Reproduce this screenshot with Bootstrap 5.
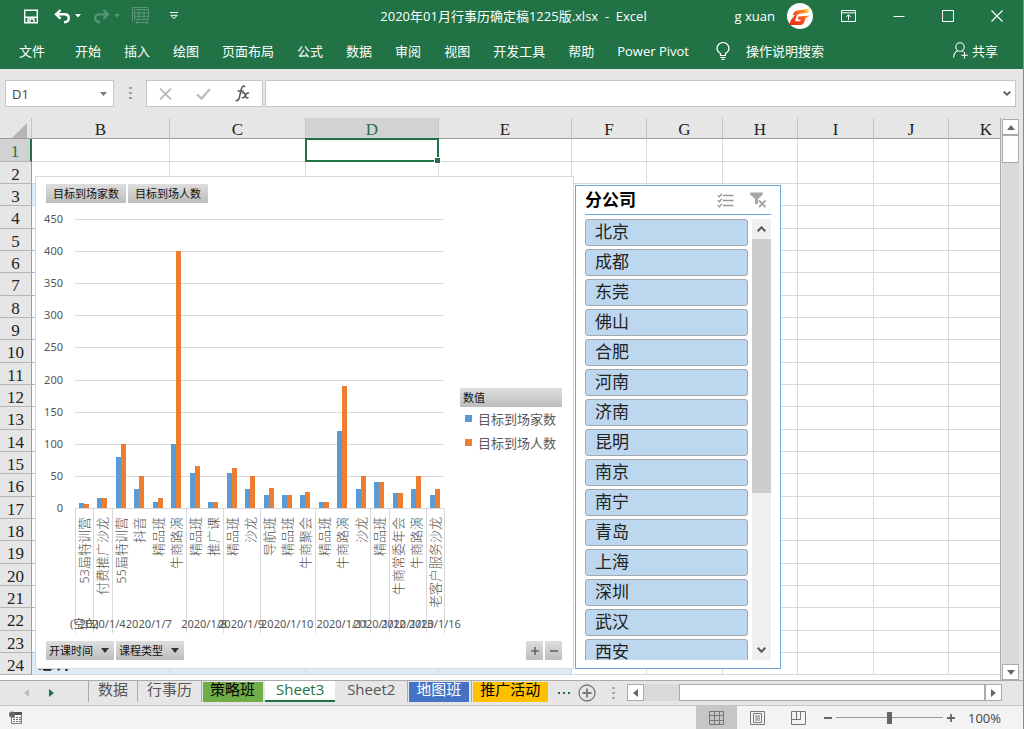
<!DOCTYPE html>
<html lang="zh-CN">
<head>
<meta charset="utf-8">
<meta name="viewport" content="width=device-width, initial-scale=1">
<title>2020年01月行事历确定稿1225版.xlsx - Excel</title>
<link href="https://cdn.jsdelivr.net/npm/bootstrap@5.3.0/dist/css/bootstrap.min.css" rel="stylesheet">
<style>
  :root { --xl-green: #217346; --edge: #ababab; --chrome: #e6e6e6; }
  body { font: 13px/18px "Open Sans", "Noto Sans CJK SC", sans-serif; color: #444; background: var(--chrome); }
  svg { display: block; flex: none; }
  .ibtn { display: flex; align-items: center; justify-content: center; padding: 0; border: 0; background: none; color: inherit; }
  .app { border-right: 1px solid #8a8a8a; }

  .titlebar { background: var(--xl-green); color: #fff; height: 69px; }
  .title-row { height: 32px; }
  .side { flex: 1 1 0; }
  .side:first-child { padding-left: 24px; }
  .side:last-child { padding-right: 20px; }
  .window-btns { gap: 37px; }
  .ribbon { height: 37px; padding: 0 25px 0 19px; gap: 23px; }
  .ribbon a { color: #fff; text-decoration: none; white-space: nowrap; }
  .ribbon .file-tab { margin-right: 7px; }

  .formula { height: 49px; padding: 11px 7px 12px 5px; }
  .fbox { border: 1px solid #c6c6c6; background: #fff; height: 27px; }
  .fbox input { border: 0; outline: 0; background: none; color: #444; min-width: 0; padding: 0 6px; }
  .name-box { width: 109px; padding-right: 6px; }
  .fx-box { width: 117px; margin-right: 2px; }
  .grip { width: 32px; color: #a0a0a0; }

  .pane { min-height: 0; }
  .viewport { min-width: 0; background: #fff; border-right: 1px solid var(--edge); }
  .sheet { table-layout: fixed; border-collapse: separate; border-spacing: 0; width: 1024px; font: 17px/20px "Liberation Serif", "Noto Sans CJK SC", serif; color: #222; }
  .sheet th { font-weight: 400; text-align: center; padding: 0; background: var(--chrome); border-right: 1px solid #b5b5b5; border-bottom: 1px solid #b5b5b5; }
  .sheet thead th { height: 21px; line-height: 16px; padding-top: 4px; border-right-color: #c4c4c4; border-bottom-color: #9b9b9b; }
  .sheet tbody tr { height: 22px; }
  .sheet tbody tr:nth-child(3n+1) { height: 23px; }
  .sheet tbody th { line-height: 16px; padding-top: 4px; border-right-color: #9b9b9b; }
  .sheet td { padding: 0; line-height: 18px; border-right: 1px solid #d9d9d9; border-bottom: 1px solid #d9d9d9; }
  .sheet td.pivot-line { border-bottom-color: #9bc2e6; }
  .sheet td.pivot-fill { background: #ddebf7; font-weight: 700; padding-left: 6px; }
  .sheet th.picked { background: #d2d2d2; color: var(--xl-green); }
  .sheet thead th.picked { border-bottom-color: var(--xl-green); }
  .sheet tbody th.picked { border-right: 2px solid var(--xl-green); }
  .sheet td.active-cell { position: relative; }
  .cursor { position: absolute; inset: -1px -1px -1px -1px; border: 2px solid var(--xl-green); }
  .cursor::after { content: ""; position: absolute; right: -3px; bottom: -3px; width: 5px; height: 5px; background: var(--xl-green); outline: 1px solid #fff; }

  .chart-obj { position: absolute; left: 35px; top: 58px; width: 539px; height: 493px; background: #fff; border: 1px solid #d9d9d9; padding: 7px 11px 8px 10px; }
  .field { height: 19px; padding: 0 7px; border: 0; color: #111; font-size: 11px; line-height: 19px; background: linear-gradient(#dedede, #bdbdbd); white-space: nowrap; display: flex; align-items: center; }
  .field.drop { padding: 0 5px 0 3px; gap: 8px; }
  .field.step { width: 17px; padding: 0; justify-content: center; }
  .legend-box { width: 102px; padding-bottom: 2px; }
  .legend-box .field { padding: 0 3px; }
  .legend-row { height: 24px; padding-left: 5px; gap: 6px; color: #595959; white-space: nowrap; }
  .swatch { width: 7px; height: 7px; }
  .blue { background: #5b9bd5; } .orange { background: #ed7d31; }
  .plot { overflow: visible; font-family: "Noto Sans", "Noto Sans CJK SC", sans-serif; font-size: 11px; fill: #555; }
  .plot .cat { font-size: 13px; font-weight: 300; }

  .slicer { position: absolute; left: 575px; top: 67px; width: 206px; height: 484px; background: #fff; border: 1px solid #6fa8dc; padding: 0 9px 8px; font: 17px/20px "Liberation Serif", "Noto Sans CJK SC", serif; }
  .slicer-head { height: 29px; border-bottom: 1px solid #6fa8dc; margin-bottom: 4px; flex: none; color: #999; }
  .slicer-head strong { color: #000; padding-top: 2px; }
  .slicer-list { gap: 3px; width: 163px; }
  .slicer-list button { height: 27px; flex: none; border: 1px solid #a0a8b0; border-radius: 3px; background: #bdd7ee; color: #222; text-align: left; padding: 0 9px; line-height: 25px; }
  .vbar { width: 19px; background: #f0f0f0; color: #555; }
  .vbar .ibtn { height: 20px; width: 19px; }
  .vbar .slide { height: 254px; background: #cdcdcd; }

  .vscroll { width: 22px; padding: 1px 4px 0 1px; }
  .vscroll .track, .hscroll .track { background: #dadada; }
  .sbtn { width: 17px; height: 16px; background: #fff; border: 1px solid var(--edge); color: #666; flex: none; }
  .thumb { background: #fff; border: 1px solid var(--edge); }
  .vscroll .thumb { height: 28px; }

  .tabbar { height: 25px; border-top: 1px solid var(--edge); flex: none; }
  .tabbar .nav-gap { width: 88px; padding-left: 20px; gap: 20px; }
  .tab { height: 21px; border: 0; border-left: 1px solid var(--edge); padding: 0 9px 4px; background: none; color: #555; font-size: 15px; line-height: 17px; white-space: nowrap; }
  .tab.tinted { box-shadow: inset 1px 0 var(--chrome), inset 0 1px var(--chrome); padding: 0 8px 4px; margin-right: 2px; }
  .tab.current { background: #fff; color: var(--xl-green); border-left: 0; border-bottom: 2px solid var(--xl-green); padding: 0 11px 2px; }
  .hscroll { min-width: 0; padding-right: 21px; height: 17px; margin-top: 3px; }
  .hscroll .track { width: 35px; }

  .status { height: 24px; border-top: 1px solid #c6c6c6; background: #f3f3f3; flex: none; padding-right: 22px; color: #444; }
  .view { width: 41px; height: 23px; }
  .view.on { background: #c6c6c6; }
  .zoom-range { appearance: none; width: 107px; height: 14px; margin: 0 3px; background: linear-gradient(#999, #999) center / 100% 1px no-repeat; }
  .zoom-range::-webkit-slider-thumb { appearance: none; width: 5px; height: 12px; background: #666; }
</style>
</head>
<body>
<div class="app vh-100 d-flex flex-column overflow-hidden">

  <header class="titlebar flex-shrink-0">
    <div class="title-row d-flex align-items-center">
      <div class="side d-flex align-items-center">
        <button class="ibtn" aria-label="保存"><svg width="14" height="15" viewBox="0 0 14 15" fill="none" stroke="#fff" stroke-width="1.4"><path d="M.7 1.200h12.600v12.600H.7zM1 8.300h12M4 14v-4h6v4"/><path d="M6 11v3"/></svg></button>
        <button class="ibtn ms-3" aria-label="撤消"><svg width="17" height="15" viewBox="0 0 17 15" fill="none" stroke="#fff" stroke-width="2.400"><path d="M6.500 1 2 5.300 6.500 9.600M2.500 5.300h7.800q4.500 0 4.500 3.800 0 4-4.800 4.200"/></svg></button>
        <svg class="ms-1" width="6" height="4" viewBox="0 0 6 4" fill="#fff"><path d="M0 0h6L3 3.500z"/></svg>
        <button class="ibtn ms-2 ps-1 opacity-25" aria-label="恢复"><svg width="17" height="15" viewBox="0 0 17 15" fill="none" stroke="#fff" stroke-width="2.200"><path d="m10.500 1 4.500 4.300-4.500 4.300M14.500 5.300H6.700Q2.200 5.300 2.200 9.100q0 4 4.800 4.200"/></svg></button>
        <svg class="ms-1 opacity-25" width="6" height="4" viewBox="0 0 6 4" fill="#fff"><path d="M0 0h6L3 3.500z"/></svg>
        <button class="ibtn ms-2 ps-1 opacity-25" aria-label="自动调整"><svg width="18" height="18" viewBox="0 0 18 18" fill="none" stroke="#fff"><path d="M.5 15V.5H16M2.500 2.500h14v10h-14zM2.500 6h14M2.500 9.300h14M7 2.500v10M12 2.500v10M4 15.500h12M6 13.300l-2.300 2.200L6 17.700M14 13.300l2.300 2.200-2.300 2.200"/></svg></button>
        <button class="ibtn ms-3" aria-label="自定义"><svg class="ms-1" width="8" height="8" viewBox="0 0 8 8" fill="none" stroke="#fff"><path d="M0 .5h8M.8 3.300h6.400L4 6.700z"/></svg></button>
      </div>
      <div class="text-nowrap">2020年01月行事历确定稿1225版.xlsx &nbsp;-&nbsp; Excel</div>
      <div class="side d-flex align-items-center justify-content-end">
        <span class="me-2 pe-1 text-nowrap">g xuan</span>
        <svg width="26" height="26" viewBox="0 0 26 26"><defs><linearGradient id="flame" x1="0" y1="1" x2="1" y2="0"><stop offset="0" stop-color="#ee2418"/><stop offset=".5" stop-color="#f4551d"/><stop offset="1" stop-color="#ffd21c"/></linearGradient></defs><circle cx="13" cy="13" r="13" fill="#fff"/><path fill="url(#flame)" d="M24.500 5.200 10.500 7.500Q7 8 6.200 11l-.4 1.300L8 12 4 17l-2 5h11q3.500 0 4.500-3.500l1-3.500 5-2.500-12 1-1 3h3.200l-.5 1.800H8l1.500-5q.6-2.300 3-2.600l8-1.200 2.500-1.800-5 .2z"/></svg>
        <div class="window-btns d-flex align-items-center ms-4 ps-1">
          <button class="ibtn" aria-label="功能区显示选项"><svg width="15" height="12" viewBox="0 0 15 12" fill="none" stroke="#fff"><path d="M.5.5h14v11H.5zM1 2.800h13M7.500 10V5M5.200 7l2.300-2.300L9.800 7"/></svg></button>
          <button class="ibtn" aria-label="最小化"><svg width="12" height="12" viewBox="0 0 12 12" stroke="#fff"><path d="M.5 6.500h11"/></svg></button>
          <button class="ibtn" aria-label="最大化"><svg width="12" height="12" viewBox="0 0 12 12" fill="none" stroke="#fff"><path d="M.5.5h11v11H.5z"/></svg></button>
          <button class="ibtn" aria-label="关闭"><svg width="12" height="12" viewBox="0 0 12 12" stroke="#fff" stroke-width="1.200"><path d="m.5.5 11 11m0-11-11 11"/></svg></button>
        </div>
      </div>
    </div>
    <nav class="ribbon d-flex align-items-center">
      <a class="file-tab" href="#">文件</a><a href="#">开始</a><a href="#">插入</a><a href="#">绘图</a><a href="#">页面布局</a><a href="#">公式</a><a href="#">数据</a><a href="#">审阅</a><a href="#">视图</a><a href="#">开发工具</a><a href="#">帮助</a><a href="#">Power Pivot</a>
      <a class="d-flex align-items-center gap-3 ms-1" href="#"><svg width="14" height="18" viewBox="0 0 14 18" fill="none" stroke="#fff" stroke-width="1.200"><path d="M4.500 13.500v-2Q1 9.500 1 6.500a6 6 0 0 1 12 0q0 3-3.500 5v2zM4.500 15.500h5M5.500 17.300h3"/></svg><span>操作说明搜索</span></a>
      <a class="d-flex align-items-center gap-1 ms-auto" href="#"><svg width="15" height="17" viewBox="0 0 15 17" fill="none" stroke="#fff" stroke-width="1.100"><circle cx="7" cy="5" r="4.200"/><path d="M.6 15.500Q1 10 5 8.800M9 8.800l1.500.9M11.500 10v6.500M8.200 13.200h6.600"/></svg><span>共享</span></a>
    </nav>
  </header>

  <div class="formula d-flex flex-shrink-0">
    <div class="fbox name-box d-flex align-items-center">
      <input class="flex-fill" aria-label="名称框" value="D1">
      <button class="ibtn" aria-label="名称列表"><svg width="7" height="4" viewBox="0 0 7 4" fill="#777"><path d="M0 0h7L3.500 4z"/></svg></button>
    </div>
    <div class="grip d-flex align-items-center justify-content-center"><svg width="3" height="12" viewBox="0 0 3 12" fill="currentColor"><path d="M0 0h3v2H0zM0 5h3v2H0zM0 10h3v2H0z"/></svg></div>
    <div class="fbox fx-box d-flex align-items-center justify-content-around">
      <button class="ibtn" aria-label="取消"><svg width="13" height="12" viewBox="0 0 13 12" stroke="#bbb" stroke-width="1.800"><path d="m1 .5 11 11M12 .5l-11 11"/></svg></button>
      <button class="ibtn" aria-label="输入"><svg width="15" height="12" viewBox="0 0 15 12" fill="none" stroke="#bbb" stroke-width="2.200"><path d="m1 6.500 4.500 4L14 1"/></svg></button>
      <button class="ibtn" aria-label="插入函数"><svg width="15" height="17" viewBox="0 0 15 17" fill="none" stroke="#555" stroke-width="1.500" stroke-linecap="round"><path d="M9.500 1.500Q7.500.2 6.500 3.500L4.200 13q-.8 3-3 2.500M3.200 6h5"/><path d="M7.500 8q1.800-1 2.500 1l1 3q.6 1.500 2 .7M13.500 8q-1-.7-2.500 1.500L9.300 12Q8.300 13.200 7.300 12.700"/></svg></button>
    </div>
    <div class="fbox flex-fill d-flex align-items-center pe-1">
      <input class="flex-fill" aria-label="编辑栏">
      <button class="ibtn" aria-label="展开编辑栏"><svg width="8" height="5" viewBox="0 0 8 5" fill="none" stroke="#666" stroke-width="2"><path d="m.7.7 3.300 3 3.300-3"/></svg></button>
    </div>
  </div>

  <main class="pane flex-fill d-flex">
    <div class="viewport flex-fill position-relative overflow-hidden">
      <table class="sheet" id="sheet"></table>

      <section class="chart-obj d-flex flex-column" aria-label="数据透视图">
        <div class="d-flex flex-shrink-0" style="gap:2px"><button class="field">目标到场家数</button><button class="field">目标到场人数</button></div>
        <div class="d-flex flex-fill">
          <svg class="plot" id="plot" width="414" height="438" viewBox="0 0 414 438"></svg>
          <div class="legend-box align-self-center">
            <div class="field">数值</div>
            <div class="legend-row d-flex align-items-center"><span class="swatch blue"></span>目标到场家数</div>
            <div class="legend-row d-flex align-items-center"><span class="swatch orange"></span>目标到场人数</div>
          </div>
        </div>
        <div class="d-flex flex-shrink-0" style="gap:2px">
          <button class="field drop">开课时间<svg width="8" height="5" viewBox="0 0 8 5" fill="#333"><path d="M0 0h8L4 5z"/></svg></button>
          <button class="field drop me-auto">课程类型<svg width="8" height="5" viewBox="0 0 8 5" fill="#333"><path d="M0 0h8L4 5z"/></svg></button>
          <button class="field step" aria-label="展开"><svg width="8" height="8" viewBox="0 0 8 8" stroke="#666" stroke-width="1.600"><path d="M0 4h8M4 0v8"/></svg></button>
          <button class="field step" aria-label="折叠"><svg width="8" height="8" viewBox="0 0 8 8" stroke="#666" stroke-width="1.600"><path d="M0 4h8"/></svg></button>
        </div>
      </section>

      <section class="slicer d-flex flex-column" aria-label="切片器">
        <div class="slicer-head d-flex align-items-center">
          <strong class="me-auto">分公司</strong>
          <button class="ibtn me-3" aria-label="多选"><svg width="17" height="15" viewBox="0 0 17 15" fill="none" stroke="currentColor" stroke-width="1.300"><path d="M6 2.500h10.500M6 7.500h10.500M6 12.500h10.500M.7 2.200l1.600 1.500L5 .7M.7 7.200l1.600 1.500L5 5.700M.7 12.200l1.600 1.500L5 10.700"/></svg></button>
          <button class="ibtn me-1" aria-label="清除筛选器"><svg width="17" height="16" viewBox="0 0 17 16"><path d="M0 .5h13v1.800L8 7v5H5V7L0 2.300z" fill="#a5a5a5"/><path d="m9 8.500 6.500 6.500m0-6.500L9 15" stroke="#a5a5a5" stroke-width="1.800"/></svg></button>
        </div>
        <div class="d-flex flex-fill justify-content-between overflow-hidden">
          <div class="slicer-list d-flex flex-column overflow-hidden" id="branches"></div>
          <div class="vbar d-flex flex-column justify-content-between">
            <div><button class="ibtn" aria-label="向上"><svg width="9" height="6" viewBox="0 0 9 6" fill="none" stroke="currentColor" stroke-width="2"><path d="M.7 5.200 4.500 1.300l3.800 3.900"/></svg></button><div class="slide"></div></div>
            <button class="ibtn" aria-label="向下"><svg width="9" height="6" viewBox="0 0 9 6" fill="none" stroke="currentColor" stroke-width="2"><path d="M.7.8l3.800 3.900L8.300.8"/></svg></button>
          </div>
        </div>
      </section>
    </div>

    <div class="vscroll d-flex flex-column">
      <button class="ibtn sbtn" aria-label="向上滚动"><svg width="8" height="5" viewBox="0 0 8 5" fill="currentColor"><path d="M0 5h8L4 0z"/></svg></button>
      <div class="track flex-fill"><div class="thumb"></div></div>
      <button class="ibtn sbtn" aria-label="向下滚动"><svg width="8" height="5" viewBox="0 0 8 5" fill="currentColor"><path d="M0 0h8L4 5z"/></svg></button>
    </div>
  </main>

  <div class="tabbar d-flex">
    <div class="nav-gap d-flex align-items-center flex-shrink-0">
      <button class="ibtn ms-1" aria-label="上一张"><svg width="5" height="8" viewBox="0 0 5 8" fill="#bbb"><path d="M5 0v8L0 4z"/></svg></button>
      <button class="ibtn" aria-label="下一张"><svg width="5" height="8" viewBox="0 0 5 8" fill="#217346"><path d="M0 0v8l5-4z"/></svg></button>
    </div>
    <button class="tab">数据</button>
    <button class="tab">行事历</button>
    <button class="tab tinted text-black" style="background:#70ad47">策略班</button>
    <button class="tab current">Sheet3</button>
    <button class="tab border-start-0 px-2 me-1">&nbsp;Sheet2</button>
    <button class="tab tinted text-white" style="background:#4472c4">地图班</button>
    <button class="tab tinted text-black" style="background:#ffc000">推广活动</button>
    <button class="ibtn ms-1 ps-1 flex-shrink-0" aria-label="更多工作表"><svg width="12" height="2" viewBox="0 0 12 2" fill="#217346"><path d="M0 0h2v2H0zM5 0h2v2H5zM10 0h2v2h-2z"/></svg></button>
    <button class="ibtn ms-2 flex-shrink-0" aria-label="新工作表"><svg width="18" height="18" viewBox="0 0 18 18" fill="none" stroke="#777" stroke-width="1.300"><circle cx="9" cy="9" r="8"/><path d="M4.500 9h9M9 4.500v9" stroke-width="1.800"/></svg></button>
    <span class="d-flex align-items-center ms-3 me-2 pe-1 flex-shrink-0"><svg width="3" height="12" viewBox="0 0 3 12" fill="#aaa"><path d="M0 0h3v2H0zM0 5h3v2H0zM0 10h3v2H0z"/></svg></span>
    <div class="hscroll flex-fill d-flex">
      <button class="ibtn sbtn h-100" aria-label="向左滚动"><svg width="5" height="8" viewBox="0 0 5 8" fill="currentColor"><path d="M5 0v8L0 4z"/></svg></button>
      <div class="track"></div>
      <div class="thumb flex-fill"></div>
      <button class="ibtn sbtn h-100" aria-label="向右滚动"><svg width="5" height="8" viewBox="0 0 5 8" fill="currentColor"><path d="M0 0v8l5-4z"/></svg></button>
    </div>
  </div>

  <footer class="status d-flex align-items-center">
    <button class="ibtn ms-2 me-auto" aria-label="录制宏"><svg width="15" height="14" viewBox="0 0 15 14"><path d="M3.500 1.500h10v11h-10z" fill="#fff" stroke="#777"/><path d="M5 1h9v3H5z" fill="#555"/><path d="M5 6h2v1H5zM8 6h2v1H8zM11 6h2v1h-2zM5 8h2v1H5zM8 8h2v1H8zM11 8h2v1h-2zM5 10h2v1H5zM8 10h2v1H8zM11 10h2v1h-2z" fill="#666"/><circle cx="4" cy="3.500" r="3" fill="#666"/></svg></button>
    <button class="ibtn view on" aria-label="普通"><svg width="15" height="14" viewBox="0 0 15 14" fill="none" stroke="#777"><path d="M.5.5h14v13H.5zM0 4.500h15M0 9.500h15M5.500 0v14M10.500 0v14"/></svg></button>
    <button class="ibtn view" aria-label="页面布局"><svg width="15" height="14" viewBox="0 0 15 14" fill="none" stroke="#777"><path d="M.5.5h14v13H.5zM3.500 2.500h8v9h-8zM5 5h5M5 7h5M5 9h5"/></svg></button>
    <button class="ibtn view" aria-label="分页预览"><svg width="15" height="14" viewBox="0 0 15 14" fill="none" stroke="#777"><path d="M.5.5h14v13H.5zM.5 8.500h9V.5M5.500.5v8"/></svg></button>
    <button class="ibtn ms-1" aria-label="缩小"><svg width="10" height="10" viewBox="0 0 10 10" stroke="#666" stroke-width="2"><path d="M1 5h8"/></svg></button>
    <input class="zoom-range" type="range" min="0" max="100" value="50" aria-label="缩放">
    <button class="ibtn" aria-label="放大"><svg width="10" height="10" viewBox="0 0 10 10" stroke="#666" stroke-width="1.800"><path d="M1 5h8M5 1v8"/></svg></button>
    <span class="ms-2 ps-1">100%</span>
  </footer>
</div>

<script src="https://cdn.jsdelivr.net/npm/bootstrap@5.3.0/dist/js/bootstrap.bundle.min.js"></script>
<script>
  // Worksheet grid
  const cols = { B: 138, C: 136, D: 133, E: 133, F: 75, G: 76, H: 75, I: 76, J: 75, K: 75 };
  const names = Object.keys(cols);
  let grid = '<colgroup><col style="width:32px">' + names.map(n => `<col style="width:${cols[n]}px">`).join('') + '</colgroup>';
  grid += '<thead><tr><th><svg class="ms-auto me-1" width="15" height="15" viewBox="0 0 15 15" fill="#b5b5b5"><path d="M15 0v15H0z"/></svg></th>' +
    names.map(n => `<th class="${n === 'D' ? 'picked' : ''}">${n}</th>`).join('') + '</tr></thead><tbody>';
  for (let r = 1; r <= 24; r++) {
    grid += `<tr><th class="${r === 1 ? 'picked' : ''}">${r}</th>`;
    names.forEach((n, i) => {
      const fill = (r === 3 && i === 0) || (r === 24 && i < 4);
      const cls = r === 1 && n === 'D' ? 'active-cell' : fill ? 'pivot-fill' : r > 3 && i === 0 ? 'pivot-line' : '';
      grid += `<td class="${cls}">${cls === 'active-cell' ? '<span class="cursor"></span>' : r === 24 && i === 0 ? '总计' : ''}</td>`;
    });
    grid += '</tr>';
  }
  document.getElementById('sheet').innerHTML = grid + '</tbody>';

  // Slicer entries
  document.getElementById('branches').innerHTML =
    ['北京', '成都', '东莞', '佛山', '合肥', '河南', '济南', '昆明', '南京', '南宁', '青岛', '上海', '深圳', '武汉', '西安']
      .map(b => `<button>${b}</button>`).join('');

  // Pivot chart: date groups, each with [course type, planned companies, planned people]
  const groups = [
    ['(空白)', [['53届特训营', 8, 6]]],
    ['2020/1/4', [['付费推广沙龙', 15, 15]]],
    ['2020/1/7', [['55届特训营', 80, 100], ['抖音', 30, 50], ['精品班', 10, 15], ['牛商路演', 100, 400]]],
    ['2020/1/8', [['精品班', 54, 65], ['推广课', 10, 10]]],
    ['2020/1/9', [['精品班', 54, 63], ['沙龙', 30, 50]]],
    ['2020/1/10', [['导航班', 20, 31], ['精品班', 20, 20], ['牛商聚会', 20, 25]]],
    ['2020/1/11', [['精品班', 10, 10], ['牛商路演', 120, 190], ['沙龙', 30, 50]]],
    ['2020/1/12', [['精品班', 40, 40]]],
    ['2020/1/13', [['牛商常委年会', 24, 24], ['牛商路演', 30, 50]]],
    ['2020/1/16', [['老客户服务沙龙', 20, 30]]]
  ];
  const left = 29, right = 398, base = 305, top0 = 16, step = (right - left) / 20;
  const h = v => Math.round(v / 450 * (base - top0));
  const line = (x1, y1, x2, y2) => `<path d="M${x1} ${y1}L${x2} ${y2}" stroke="#d9d9d9"/>`;
  let out = '';
  for (let v = 0; v <= 450; v += 50) {
    const y = base - h(v);
    out += line(left, y + .5, right, y + .5) + `<text x="17" y="${y + 4}" text-anchor="end">${v}</text>`;
  }
  let k = 0;
  const edge = () => Math.round(left + k * step) + .5;
  out += line(edge(), base, edge(), 430);
  groups.forEach(([date, items]) => {
    const start = left + k * step;
    items.forEach(([name, a, b]) => {
      const x = Math.round(left + k * step);
      out += `<rect x="${x + 4}" y="${base - h(a)}" width="5" height="${h(a)}" fill="#5b9bd5"/>` +
        `<rect x="${x + 9}" y="${base - h(b)}" width="5" height="${h(b)}" fill="#ed7d31"/>` +
        `<text class="cat" text-anchor="end" transform="translate(${x + 14} 314) rotate(-90)">${name}</text>`;
      k++;
    });
    out += line(edge(), base, edge(), 430) +
      `<text x="${(start + left + k * step) / 2}" y="425" text-anchor="middle">${date}</text>`;
  });
  document.getElementById('plot').innerHTML = out;
</script>
</body>
</html>
